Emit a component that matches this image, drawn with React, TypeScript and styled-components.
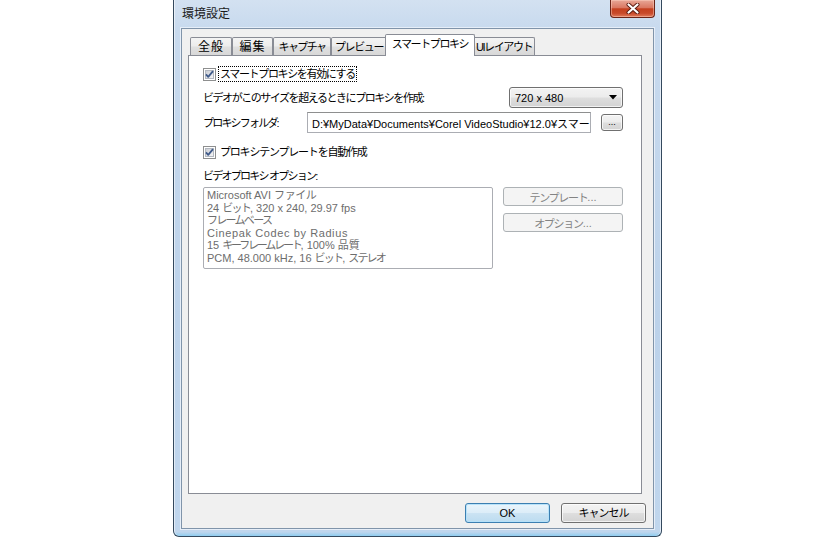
import React from "react";
import styled, { createGlobalStyle } from "styled-components";

const GlobalStyle = createGlobalStyle`
  html, body { margin: 0; padding: 0; background: #ffffff; }
  body {
    font-family: "Liberation Sans", "Noto Sans CJK JP", sans-serif;
    font-size: 11px;
    color: #000;
  }
  * { box-sizing: border-box; }
`;

const Page = styled.div`
  width: 840px;
  height: 537px;
  padding-left: 173px;
  display: flex;
  overflow: hidden;
`;

const Window = styled.div`
  width: 489px;
  height: 537px;
  display: flex;
  flex-direction: column;
  padding: 0 7px 7px;
  border: 1px solid #34495e;
  border-top: none;
  border-radius: 0 0 6px 6px;
  background: linear-gradient(
    to bottom,
    #d3e1f1 0px,
    #c8daee 28px,
    #bcd2ea 60%,
    #c0d6ed calc(100% - 4px),
    #8fcdf0 100%
  );
  box-shadow: inset 1px 0 0 rgba(255, 255, 255, 0.55),
    inset -1px 0 0 rgba(255, 255, 255, 0.55);
`;

const TitleBar = styled.div`
  height: 28px;
  display: flex;
  align-items: flex-start;
  justify-content: space-between;
`;

const Title = styled.span`
  margin-top: 6px;
  padding-left: 1px;
  font-size: 12px;
  line-height: 16px;
  color: #1b1b1b;
`;

const CloseButton = styled.div`
  width: 45px;
  height: 18px;
  margin-right: -1px;
  border: 1px solid #6b2418;
  border-top: none;
  border-radius: 0 0 4px 4px;
  background: linear-gradient(
    to bottom,
    #e8a797 0%,
    #da7862 45%,
    #c4401f 52%,
    #c84a2b 78%,
    #e27b5c 100%
  );
  box-shadow: inset 0 0 0 1px rgba(255, 215, 200, 0.45);
  display: flex;
  align-items: center;
  justify-content: center;
`;

const Client = styled.div`
  flex: 1;
  display: flex;
  flex-direction: column;
  background: #f0f0f0;
  border: 1px solid #8094aa;
  box-shadow: 0 0 0 1px #e6eef8;
  padding: 5px 11px 5px 6px;
`;

const TabStrip = styled.div`
  height: 21px;
  display: flex;
  align-items: flex-end;
  padding-left: 2px;
  position: relative;
  z-index: 1;
`;

const Tab = styled.div<{ $w: number; $active?: boolean; $ls: number; $fs: number }>`
  position: relative;
  z-index: ${(p) => (p.$active ? 2 : 1)};
  width: ${(p) => p.$w}px;
  height: ${(p) => (p.$active ? 22 : 18)}px;
  margin: 0 ${(p) => (p.$active ? -2 : 0)}px ${(p) => (p.$active ? -1 : 0)}px
    ${(p) => (p.$active ? -2 : 0)}px;
  border: 1px solid #898c95;
  border-bottom: none;
  border-radius: 2px 2px 0 0;
  background: ${(p) =>
    p.$active
      ? "#ffffff"
      : "linear-gradient(to bottom, #f4f4f4 0%, #ececec 48%, #e0e0e0 52%, #d8d8d8 100%)"};
  display: flex;
  align-items: center;
  justify-content: center;
  padding-bottom: ${(p) => (p.$active ? 3 : 0)}px;
  font-size: ${(p) => p.$fs}px;
  letter-spacing: ${(p) => p.$ls}px;
  line-height: 14px;
  white-space: nowrap;
  color: #000;
`;

const Panel = styled.div`
  flex: 1;
  background: #ffffff;
  border: 1px solid #898c95;
  padding: 0 18px 0 14px;
  display: flex;
  flex-direction: column;
`;

const Row = styled.div<{ $mt: number; $h: number }>`
  margin-top: ${(p) => p.$mt}px;
  height: ${(p) => p.$h}px;
  display: flex;
  align-items: center;
`;

const TopRow = styled.div<{ $mt: number }>`
  margin-top: ${(p) => p.$mt}px;
  display: flex;
  align-items: flex-start;
`;

const Label = styled.span<{ $w?: number; $ls: number }>`
  ${(p) => (p.$w ? `width: ${p.$w}px; flex: none;` : "")}
  letter-spacing: ${(p) => p.$ls}px;
  line-height: 14px;
  white-space: nowrap;
`;

const CheckLabel = styled.span<{ $focus?: boolean; $ls: number }>`
  margin-left: 2px;
  padding: 0 1px;
  height: 16px;
  display: flex;
  align-items: center;
  letter-spacing: ${(p) => p.$ls}px;
  line-height: 14px;
  white-space: nowrap;
  border: 1px dotted ${(p) => (p.$focus ? "#000" : "transparent")};
`;

const Jp = styled.span<{ $ls?: number }>`
  letter-spacing: ${(p) => p.$ls ?? -1.3}px;
`;

const Combo = styled.div`
  margin-left: auto;
  width: 114px;
  height: 21px;
  border: 1px solid #707070;
  border-radius: 3px;
  background: linear-gradient(to bottom, #f3f3f3 0%, #ececec 48%, #dedede 52%, #d3d3d3 100%);
  box-shadow: inset 0 0 0 1px rgba(255, 255, 255, 0.7);
  display: flex;
  align-items: center;
  justify-content: space-between;
  padding: 0 5px 0 5px;
`;

const TextInput = styled.div`
  flex: 1;
  height: 21px;
  border: 1px solid #abadb3;
  border-top-color: #8e8f8f;
  background: #fff;
  display: flex;
  align-items: center;
  padding-left: 4px;
  overflow: hidden;
  white-space: nowrap;
`;

const SmallButton = styled.div`
  margin-left: 10px;
  width: 22px;
  height: 17px;
  border: 1px solid #707070;
  border-radius: 3px;
  background: linear-gradient(to bottom, #f3f3f3 0%, #ececec 48%, #dedede 52%, #d3d3d3 100%);
  box-shadow: inset 0 0 0 1px rgba(255, 255, 255, 0.7);
  display: flex;
  align-items: flex-end;
  justify-content: center;
  padding-bottom: 3px;
  font-size: 9px;
  line-height: 9px;
`;

const ListBox = styled.div`
  width: 290px;
  height: 82px;
  border: 1px solid #abadb3;
  border-radius: 2px;
  background: #fff;
  padding: 1px 3px 0;
  color: #6d6d6d;
  line-height: 12.6px;
  white-space: nowrap;
`;

const ListLine = styled.div<{ $ls?: number }>`
  letter-spacing: ${(p) => p.$ls ?? 0}px;
`;

const SideButtons = styled.div`
  margin-left: 10px;
  width: 120px;
  display: flex;
  flex-direction: column;
  gap: 7px;
`;

const DisabledButton = styled.div`
  height: 19px;
  border: 1px solid #adb2b5;
  border-radius: 3px;
  background: #f4f4f4;
  color: #838383;
  display: flex;
  align-items: center;
  justify-content: center;
`;

const ButtonRow = styled.div`
  margin-top: 9px;
  margin-right: -4px;
  height: 20px;
  display: flex;
  justify-content: flex-end;
  gap: 11px;
`;

const DialogButton = styled.div<{ $default?: boolean }>`
  width: 85px;
  height: 20px;
  border: 1px solid ${(p) => (p.$default ? "#3c7fb1" : "#707070")};
  border-radius: 3px;
  background: ${(p) =>
    p.$default
      ? "linear-gradient(to bottom, #eaf5fc 0%, #dcedf8 48%, #cbe3f3 52%, #bcdcf0 100%)"
      : "linear-gradient(to bottom, #f3f3f3 0%, #ececec 48%, #dedede 52%, #d3d3d3 100%)"};
  box-shadow: inset 0 0 0 1px
    ${(p) => (p.$default ? "rgba(180, 225, 250, 0.9)" : "rgba(255, 255, 255, 0.7)")};
  display: flex;
  align-items: center;
  justify-content: center;
  line-height: 14px;
`;

const CheckBox = () => (
  <svg width="13" height="13" viewBox="0 0 13 13" style={{ flex: "none" }}>
    <defs>
      <linearGradient id="cbg" x1="0" y1="0" x2="1" y2="1">
        <stop offset="0" stopColor="#c9ccd2" />
        <stop offset="1" stopColor="#f7f7f8" />
      </linearGradient>
    </defs>
    <rect x="0.5" y="0.5" width="12" height="12" fill="#fff" stroke="#8e8f8f" />
    <rect x="2.5" y="2.5" width="8" height="8" fill="url(#cbg)" stroke="#b3b8c0" />
    <path
      d="M3 6.4 L5.2 8.8 L10 3.2"
      fill="none"
      stroke="#3f5a8a"
      strokeWidth="1.8"
      strokeLinejoin="round"
    />
  </svg>
);

const CloseX = () => (
  <svg width="14" height="11" viewBox="0 0 14 11">
    <path d="M2.5 1.5 L11.5 9.5 M11.5 1.5 L2.5 9.5" stroke="#5a1a10" strokeWidth="4" strokeLinecap="round" />
    <path d="M2.5 1.5 L11.5 9.5 M11.5 1.5 L2.5 9.5" stroke="#ffffff" strokeWidth="2.2" strokeLinecap="round" />
  </svg>
);

const ArrowDown = () => (
  <svg width="8" height="5" viewBox="0 0 8 5">
    <path d="M0 0 H8 L4 4.5 Z" fill="#000" />
  </svg>
);

const tabs = [
  { label: "全般", w: 42, fs: 12, ls: 1 },
  { label: "編集", w: 41, fs: 12, ls: 1 },
  { label: "キャプチャ", w: 58, fs: 11, ls: -1.6 },
  { label: "プレビュー", w: 56, fs: 11, ls: -1.4 },
  { label: "スマートプロキシ", w: 90, active: true, fs: 11, ls: -1.4 },
  { label: "UIレイアウト", w: 62, fs: 11, ls: -1.4 },
];

export default function App() {
  return (
    <>
      <GlobalStyle />
      <Page>
        <Window>
          <TitleBar>
            <Title>環境設定</Title>
            <CloseButton>
              <CloseX />
            </CloseButton>
          </TitleBar>
          <Client>
            <TabStrip>
              {tabs.map((t) => (
                <Tab key={t.label} $w={t.w} $active={t.active} $fs={t.fs} $ls={t.ls}>
                  {t.label}
                </Tab>
              ))}
            </TabStrip>
            <Panel>
              <Row $mt={10} $h={16}>
                <CheckBox />
                <CheckLabel $focus $ls={-1.35}>
                  スマートプロキシを有効にする
                </CheckLabel>
              </Row>
              <Row $mt={5} $h={21}>
                <Label $ls={-1.45}>ビデオがこのサイズを超えるときにプロキシを作成:</Label>
                <Combo>
                  <span>720 x 480</span>
                  <ArrowDown />
                </Combo>
              </Row>
              <Row $mt={4} $h={21}>
                <Label $w={104} $ls={-1.8}>
                  プロキシフォルダ:
                </Label>
                <TextInput>D:¥MyData¥Documents¥Corel VideoStudio¥12.0¥スマー</TextInput>
                <SmallButton>...</SmallButton>
              </Row>
              <Row $mt={11} $h={16}>
                <CheckBox />
                <CheckLabel $ls={-1.2}>プロキシテンプレートを自動作成</CheckLabel>
              </Row>
              <Row $mt={9} $h={14}>
                <Label $ls={-1.75}>ビデオプロキシ オプション:</Label>
              </Row>
              <TopRow $mt={4}>
                <ListBox>
                  <ListLine>
                    Microsoft AVI <Jp $ls={-0.4}>ファイル</Jp>
                  </ListLine>
                  <ListLine>
                    24 <Jp $ls={-1.8}>ビット</Jp>, 320 x 240, 29.97 fps
                  </ListLine>
                  <ListLine>
                    <Jp $ls={-1.7}>フレームベース</Jp>
                  </ListLine>
                  <ListLine $ls={0.6}>Cinepak Codec by Radius</ListLine>
                  <ListLine>
                    15 <Jp $ls={-2.2}>キーフレームレート</Jp>, 100% <Jp $ls={0}>品質</Jp>
                  </ListLine>
                  <ListLine>
                    PCM, 48.000 kHz, 16 <Jp $ls={-1.8}>ビット</Jp>, <Jp $ls={-1.9}>ステレオ</Jp>
                  </ListLine>
                </ListBox>
                <SideButtons>
                  <DisabledButton>
                    <Jp>テンプレート</Jp>...
                  </DisabledButton>
                  <DisabledButton>
                    <Jp>オプション</Jp>...
                  </DisabledButton>
                </SideButtons>
              </TopRow>
            </Panel>
            <ButtonRow>
              <DialogButton $default>OK</DialogButton>
              <DialogButton>
                <Jp $ls={-1}>キャンセル</Jp>
              </DialogButton>
            </ButtonRow>
          </Client>
        </Window>
      </Page>
    </>
  );
}
